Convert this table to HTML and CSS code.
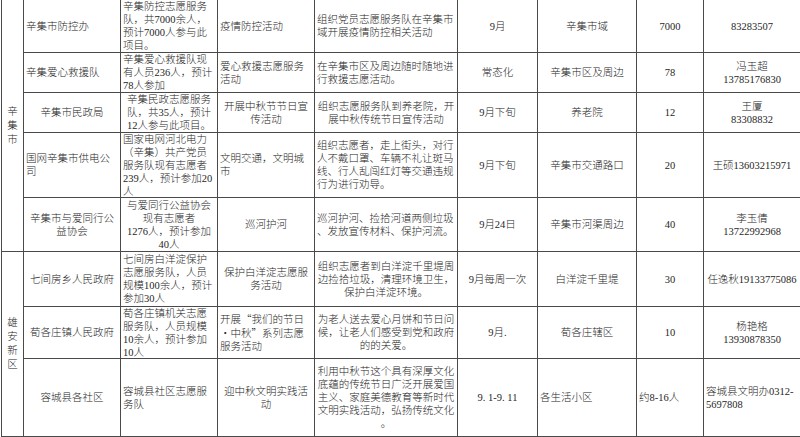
FILE: index.html
```html
<!DOCTYPE html>
<html lang="zh">
<head>
<meta charset="utf-8">
<title>志愿服务活动表</title>
<link rel="stylesheet" href="styles.css">
</head>
<body>
<div class="sheet">
  <div class="cell reg reg1">辛<br>集<br>市</div>

  <div class="cell l">辛集市防控办</div>
  <div class="cell l">辛集防控志愿服务<br>队，共7000余人，<br>预计7000人参与此<br>项目。</div>
  <div class="cell l">疫情防控活动</div>
  <div class="cell l">组织党员志愿服务队在辛集市<br>域开展疫情防控相关活动</div>
  <div class="cell">9月</div>
  <div class="cell">辛集市域</div>
  <div class="cell">7000</div>
  <div class="cell">83283507</div>

  <div class="cell l">辛集爱心救援队</div>
  <div class="cell l">辛集爱心救援队现<br>有人员236人，预计<br>78人参加</div>
  <div class="cell l">爱心救援志愿服务<br>活动</div>
  <div class="cell l">在辛集市区及周边随时随地进<br>行救援志愿活动。</div>
  <div class="cell">常态化</div>
  <div class="cell">辛集市区及周边</div>
  <div class="cell">78</div>
  <div class="cell">冯玉超<br>13785176830</div>

  <div class="cell">辛集市民政局</div>
  <div class="cell">辛集民政志愿服务<br>队，共35人，预计<br>12人参与此项目。</div>
  <div class="cell">开展中秋节节日宣<br>传活动</div>
  <div class="cell">组织志愿服务队到养老院，开<br>展中秋传统节日宣传活动</div>
  <div class="cell">9月下旬</div>
  <div class="cell">养老院</div>
  <div class="cell">12</div>
  <div class="cell">王厦<br>83308832</div>

  <div class="cell l">国网辛集市供电公<br>司</div>
  <div class="cell l">国家电网河北电力<br>（辛集）共产党员<br>服务队现有志愿者<br>239人，预计参加20<br>人</div>
  <div class="cell l">文明交通，文明城<br>市</div>
  <div class="cell l">组织志愿者，走上街头，对行<br>人不戴口罩、车辆不礼让斑马<br>线、行人乱闯红灯等交通违规<br>行为进行劝导。</div>
  <div class="cell">9月下旬</div>
  <div class="cell">辛集市交通路口</div>
  <div class="cell">20</div>
  <div class="cell">王硕13603215971</div>

  <div class="cell">辛集市与爱同行公<br>益协会</div>
  <div class="cell">与爱同行公益协会<br>现有志愿者<br>1276人，预计参加<br>40人</div>
  <div class="cell">巡河护河</div>
  <div class="cell l">巡河护河、捡拾河道两侧垃圾<br>、发放宣传材料、保护河流。</div>
  <div class="cell">9月24日</div>
  <div class="cell">辛集市河渠周边</div>
  <div class="cell">40</div>
  <div class="cell">李玉倩<br>13722992968</div>

  <div class="cell reg reg2">雄<br>安<br>新<br>区</div>

  <div class="cell">七间房乡人民政府</div>
  <div class="cell l">七间房白洋淀保护<br>志愿服务队，人员<br>规模100余人，预计<br>参加30人</div>
  <div class="cell">保护白洋淀志愿服<br>务活动</div>
  <div class="cell">组织志愿者到白洋淀千里堤周<br>边捡拾垃圾，清理环境卫生，<br>保护白洋淀环境。</div>
  <div class="cell">9月每周一次</div>
  <div class="cell">白洋淀千里堤</div>
  <div class="cell">30</div>
  <div class="cell">任逸秋19133775086</div>

  <div class="cell">荀各庄镇人民政府</div>
  <div class="cell l">荀各庄镇机关志愿<br>服务队，人员规模<br>10余人，预计参加<br>10人</div>
  <div class="cell l"><div>开展<span class="cjk">“</span>我们的节日<br><span class="cjk">•</span>中秋<span class="cjk">”</span>系列志愿<br>服务活动</div></div>
  <div class="cell">为老人送去爱心月饼和节日问<br>候，让老人们感受到党和政府<br>的的关爱。</div>
  <div class="cell">9月.</div>
  <div class="cell">荀各庄辖区</div>
  <div class="cell">10</div>
  <div class="cell">杨艳格<br>13930878350</div>

  <div class="cell">容城县各社区</div>
  <div class="cell l">容城县社区志愿服<br>务队</div>
  <div class="cell">迎中秋文明实践活<br>动</div>
  <div class="cell">利用中秋节这个具有深厚文化<br>底蕴的传统节日广泛开展爱国<br>主义、家庭美德教育等新时代<br>文明实践活动，弘扬传统文化<br>。</div>
  <div class="cell">9. 1-9. 11</div>
  <div class="cell l">各生活小区</div>
  <div class="cell l">约8-16人</div>
  <div class="cell l">容城县文明办0312-<br>5697808</div>
</div>
</body>
</html>
```
FILE: styles.css
```css
html, body {
  margin: 0;
  padding: 0;
  background: #ffffff;
  overflow: hidden;
}

.sheet {
  display: grid;
  grid-template-columns: 22px 97px 97px 97px 143px 80px 99px 67px 97px;
  grid-template-rows: 53px 40px 40px 65px 54px 55px 52px 78px;
  width: max-content;
  margin-left: 1px;
  border-left: 1px solid #4a4a4a;
  font-family: "Liberation Serif", "Noto Sans CJK SC", serif;
  font-weight: 300;
  font-size: 10.5px;
  line-height: 13px;
  color: #262626;
}

.cell {
  box-sizing: border-box;
  border-right: 1px solid #4a4a4a;
  border-bottom: 1px solid #4a4a4a;
  padding: 0 2px;
  display: flex;
  flex-direction: column;
  justify-content: center;
  text-align: center;
  white-space: nowrap;
}

.l {
  text-align: left;
}

.cjk {
  font-family: "Noto Sans CJK SC", sans-serif;
}

.reg {
  line-height: 14px;
  padding: 0;
}

.reg1 {
  grid-row: span 5;
}

.reg2 {
  grid-row: span 3;
}
```
